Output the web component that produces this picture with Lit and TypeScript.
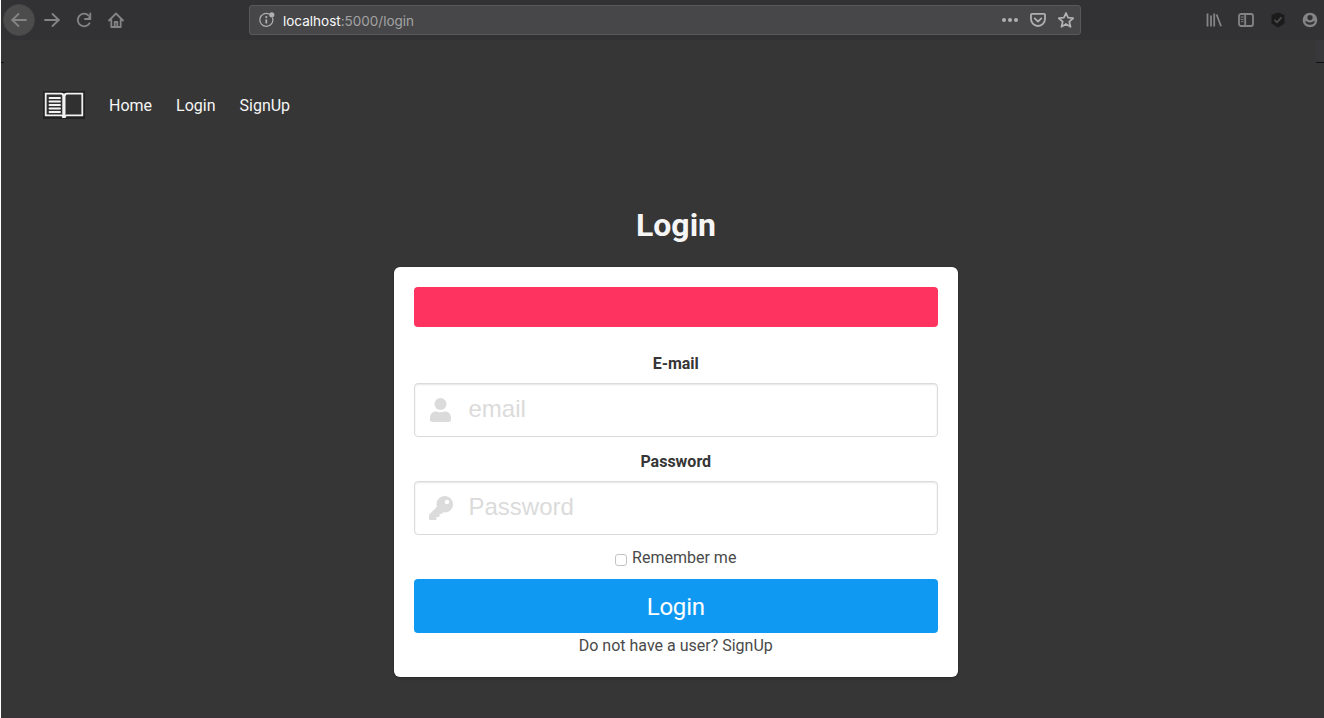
import { LitElement, html, css, svg } from "lit";
import { customElement } from "lit/decorators.js";

const back = svg`<path d="M15 8H1M7.5 2L1.3 8l6.2 6"/>`;
const forward = svg`<path d="M1 8h14M8.5 2L14.7 8l-6.2 6"/>`;
const reload = svg`<path d="M13.5 11.2A6.3 6.3 0 1 1 12.6 3.6"/><path d="M14.3 1.5V7H9" stroke-linejoin="miter"/><path d="M14 3.5V6.700H11z" fill="currentColor" stroke="none"/>`;
const home = svg`<path d="M1 8.5L8 1.5l7 7M3.3 7.5V15h9.4V7.5"/><path d="M6.7 14.5V10h2.6v4.5"/>`;

@customElement("app-root")
export class AppRoot extends LitElement {
  static styles = css`
    :host {
      display: flex;
      flex-direction: column;
      box-sizing: border-box;
      width: 1324px;
      height: 718px;
      overflow: hidden;
      position: relative;
      border-left: 1px solid #fff;
      background: #363636;
      color: #4a4a4a;
      font-family: Roboto, sans-serif;
      font-size: 16px;
      line-height: 24px;
    }
    * { box-sizing: border-box; }
    svg {
      display: block;
      flex: none;
      fill: none;
      stroke: currentColor;
      stroke-width: 1.8;
      stroke-linecap: round;
      stroke-linejoin: round;
    }
    .chrome {
      flex: none;
      display: flex;
      align-items: center;
      height: 40px;
      background: #323234;
      color: #848486;
      padding: 0 6px 0 2px;
    }
    .round {
      width: 32px;
      height: 32px;
      border-radius: 50%;
      background: #4c4c4d;
      border: 1px solid #464647;
      display: flex;
      align-items: center;
      justify-content: center;
    }
    .buttons { display: flex; align-items: center; gap: 16px; margin-left: 9px; }
    .url {
      margin-left: 125px;
      width: 832px;
      height: 30px;
      display: flex;
      align-items: center;
      border: 1px solid #59595b;
      border-radius: 3px;
      background: #474749;
      padding: 0 6px 0 9px;
      color: #b0b0b1;
    }
    .address {
      margin-left: 8px;
      padding-top: 1px;
      color: #a3a3a4;
      font-family: Inter, sans-serif;
      font-size: 13.5px;
      flex: 1;
    }
    .host { color: #f9f9fa; }
    .tools { display: flex; gap: 12px; align-items: center; }
    .extras { margin-left: auto; display: flex; gap: 16px; align-items: center; }
    .edge {
      position: absolute;
      top: 40px;
      right: 0;
      width: 8px;
      height: 23px;
      background: #38383a;
      border-bottom: 1px solid #0f0f10;
    }
    .tick {
      position: absolute;
      top: 62px;
      left: 0;
      width: 3px;
      height: 1px;
      background: #101010;
    }
    .foot {
      position: absolute;
      left: 0;
      right: 0;
      bottom: 0;
      height: 1px;
      background: #3a3035;
    }
    .nav {
      display: flex;
      align-items: center;
      height: 52px;
      margin: 39px 0 0 42px;
      color: #f5f5f5;
    }
    .links { display: flex; gap: 24px; margin-left: 24px; padding-top: 2px; }
    h1 {
      margin: 76px 0 0 27px;
      text-align: center;
      font-size: 32px;
      line-height: 36px;
      font-weight: 700;
      color: #f5f5f5;
    }
    .card {
      width: 564.5px;
      height: 410px;
      margin: 24px 0 0 392.5px;
      padding: 20px;
      border-radius: 6px;
      background: #fff;
      box-shadow: 0 2px 3px rgba(10, 10, 10, 0.1), 0 0 0 1px rgba(10, 10, 10, 0.1);
      text-align: center;
    }
    .notice { height: 40px; border-radius: 4px; background: #ff335f; margin-bottom: 24px; }
    .label { display: block; font-weight: 700; color: #363636; padding-top: 1px; margin-bottom: 7px; }
    .field {
      display: flex;
      align-items: center;
      height: 54px;
      margin-bottom: 12px;
      border: 1px solid #dbdbdb;
      border-radius: 4px;
      box-shadow: inset 0 1px 2px rgba(10, 10, 10, 0.1);
      color: #dbdbdb;
      padding-left: 14px;
    }
    .field svg { fill: currentColor; stroke: none; }
    input.text {
      flex: 1;
      min-width: 0;
      margin: 0 0 3px 16px;
      padding: 0;
      border: 0;
      outline: 0;
      background: none;
      font: 24px "Liberation Sans", Arial, sans-serif;
    }
    .text::placeholder { color: #dbdbdb; opacity: 1; }
    .remember {
      display: flex;
      justify-content: center;
      gap: 5px;
      height: 20px;
      line-height: 22px;
      margin-bottom: 12px;
    }
    .check {
      appearance: none;
      width: 12px;
      height: 12px;
      margin: 7px 0 0;
      border: 1px solid #c4c4c4;
      border-radius: 3px;
      background: #fff;
    }
    .submit {
      display: block;
      width: 100%;
      height: 54px;
      border: 0;
      border-radius: 4px;
      padding: 2px 0 0;
      background: #1099f2;
      color: #fff;
      font: 24px Roboto, sans-serif;
      letter-spacing: -0.2px;
    }
    .signup { padding-top: 1px; }
  `;

  icon(shape: unknown) {
    return html`<svg width="16" height="16" viewBox="0 0 16 16">${shape}</svg>`;
  }

  render() {
    return html`
      <div class="chrome">
        <div class="round">${this.icon(back)}</div>
        <div class="buttons">${this.icon(forward)}${this.icon(reload)}${this.icon(home)}</div>
        <div class="url">
          <svg width="16" height="16" viewBox="0 0 16 16">
            <path d="M10.2 2A6.5 6.5 0 1 0 13.6 6" stroke-width="1.2" />
            <path d="M7.3 7.4V11.5" stroke-linecap="butt" /><circle cx="7.3" cy="5.1" r="1.1" fill="currentColor" stroke="none" />
            <circle cx="12.8" cy="2.8" r="2.6" fill="currentColor" stroke="none" />
          </svg>
          <span class="address"><span class="host">localhost</span>:5000/login</span>
          <div class="tools">
            <svg width="16" height="16" viewBox="0 0 16 16"><g fill="currentColor" stroke="none"><circle cx="2" cy="8" r="2" /><circle cx="8" cy="8" r="2" /><circle cx="14" cy="8" r="2" /></g></svg>
            <svg width="16" height="16" viewBox="0 0 16 16"><path d="M2 1.8h12a1 1 0 0 1 1 1V7A7 7 0 0 1 1 7V2.8a1 1 0 0 1 1-1zM4.7 6.4L8 9.6l3.3-3.2" /></svg>
            <svg width="16" height="16" viewBox="0 0 16 16"><path d="M8 1l2.1 4.7 5.1.5-3.9 3.4 1.2 5.2L8 12.1l-4.5 2.7 1.2-5.2L.8 6.2l5.1-.5z" /></svg>
          </div>
        </div>
        <div class="extras">
          <svg width="16" height="16" viewBox="0 0 16 16"><path d="M1.5 1.5v13M5 3.5v11M8.2 1.5v13M10.6 2.5L15 14.3" stroke-linecap="butt" /></svg>
          <svg width="16" height="16" viewBox="0 0 16 16"><rect x="1" y="2" width="14" height="12" rx="2" /><path d="M7.2 2v12" /><g stroke-width="1"><path d="M3 5h2.3M3 7.3h2.3M3.5 9.6h1.5" /></g></svg>
          <svg width="16" height="16" viewBox="0 0 16 16"><path d="M8 .5L14.5 3v8.500L8 15.600 1.500 11.500V3z" fill="#1b1b1c" stroke="none" /><path d="M5 8.300l2 2 4-4.500" stroke="#4b4b4c" /></svg>
          <svg width="16" height="16" viewBox="0 0 16 16"><circle cx="8" cy="8" r="7.300" fill="currentColor" stroke="none" /><circle cx="8" cy="5.600" r="2.600" fill="#323234" stroke="none" /><path d="M3 9.200h1.600Q5.600 10.500 8 10.500t3.400-1.300H13Q11.800 12.700 8 12.700T3 9.200z" fill="#323234" stroke="none" /></svg>
        </div>
      </div>
      <div class="edge"></div>
      <div class="tick"></div>
      <nav class="nav">
        <svg width="42" height="28" viewBox="0 0 42 28">
          <rect width="42" height="28" fill="#222" stroke="none" />
          <path d="M2.700 2.700H18q2.200 0 2.200 1.300h1.600q0-1.300 2.200-1.300h15.300v21.600H24q-2 0-2.200 1.900h-1.600Q20 24.300 18 24.300H2.700z" fill="#303030" stroke="#f2f2f2" stroke-linejoin="miter" />
          <path d="M20.200 4v22M21.600 4v22" stroke="#f2f2f2" />
          <path d="M6.500 7h10.500M6.500 10.500h10.500M6.500 14h10.500M6.500 17.500h10.500M6.500 21h10.500" stroke="#f2f2f2" />
        </svg>
        <div class="links"><span>Home</span><span>Login</span><span>SignUp</span></div>
      </nav>
      <h1>Login</h1>
      <div class="card">
        <div class="notice"></div>
        <span class="label">E-mail</span>
        <div class="field">
          <svg width="24" height="24" viewBox="0 0 24 24"><circle cx="11.5" cy="6" r="6" /><path d="M7.1 13.5c1.7 0 2 .8 4.4.8s2.7-.8 4.4-.8c3.6 0 6.1 2.6 6.1 6v2.2c0 1.3-1 2.3-2.2 2.3H3.2c-1.2 0-2.2-1-2.2-2.3v-2.2c0-3.4 2.5-6 6.1-6z" /></svg>
          <input class="text" type="text" placeholder="email" />
        </div>
        <span class="label">Password</span>
        <div class="field">
          <svg width="24" height="24" viewBox="0 0 512 512"><path fill-rule="evenodd" d="M512 176C512 273.200 433.200 352 336 352c-11.220 0-22.190-1.062-32.830-3.069l-24 27A24 24 0 0 1 261.220 384H224v40c0 13.250-10.750 24-24 24h-40v40c0 13.250-10.750 24-24 24H24c-13.250 0-24-10.750-24-24v-78.060c0-6.365 2.529-12.470 7.029-16.970l161.800-161.800C163.100 213.800 160 195.300 160 176 160 78.800 238.800 0 336 0 433.500 0 512 78.530 512 176zM336 128c0 26.510 21.490 48 48 48s48-21.490 48-48-21.490-48-48-48-48 21.490-48 48z" /></svg>
          <input class="text" type="text" placeholder="Password" />
        </div>
        <label class="remember"><input class="check" type="checkbox" /><span>Remember me</span></label>
        <button class="submit">Login</button>
        <div class="signup">Do not have a user? SignUp</div>
      </div>
      <div class="foot"></div>
    `;
  }
}
